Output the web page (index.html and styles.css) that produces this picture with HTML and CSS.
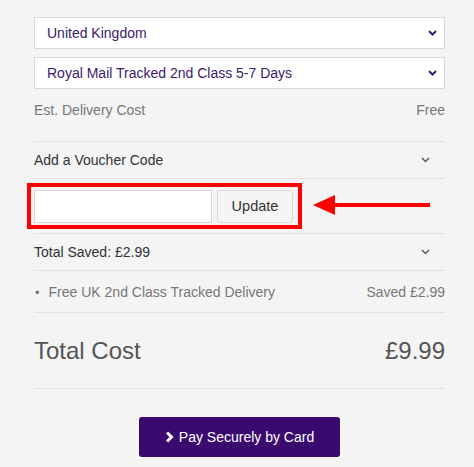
FILE: index.html
```html
<!DOCTYPE html>
<html>
<head>
<meta charset="utf-8">
<link rel="stylesheet" href="styles.css">
</head>
<body>
<div class="page">
  <div class="summary">
    <div class="select">
      <span>United Kingdom</span>
      <svg class="sel-chev" width="9" height="6" viewBox="0 0 9 6"><path d="M1 1l3.5 3.5L8 1" fill="none" stroke="#3b1a6b" stroke-width="2"/></svg>
    </div>
    <div class="select">
      <span>Royal Mail Tracked 2nd Class 5-7 Days</span>
      <svg class="sel-chev" width="9" height="6" viewBox="0 0 9 6"><path d="M1 1l3.5 3.5L8 1" fill="none" stroke="#3b1a6b" stroke-width="2"/></svg>
    </div>
    <div class="row est">
      <span>Est. Delivery Cost</span>
      <span>Free</span>
    </div>
    <div class="row toggle voucher-head">
      <span>Add a Voucher Code</span>
      <svg class="chev" width="9" height="6" viewBox="0 0 9 6"><path d="M1 1l3.5 3.5L8 1" fill="none" stroke="#555" stroke-width="1.4"/></svg>
    </div>
    <div class="row voucher-form">
      <div class="voucher-box">
        <input class="voucher-input" type="text">
        <button class="update-btn">Update</button>
        <div class="highlight"></div>
      </div>
      <svg class="arrow" width="120" height="22" viewBox="0 0 120 22"><path d="M20 11H117" stroke="#f00" stroke-width="4"/><path d="M0 11L22 1V21Z" fill="#f00"/></svg>
    </div>
    <div class="row toggle saved-head">
      <span>Total Saved: £2.99</span>
      <svg class="chev" width="9" height="6" viewBox="0 0 9 6"><path d="M1 1l3.5 3.5L8 1" fill="none" stroke="#555" stroke-width="1.4"/></svg>
    </div>
    <div class="row saving">
      <span class="item"><span class="bullet">•</span>Free UK 2nd Class Tracked Delivery</span>
      <span>Saved £2.99</span>
    </div>
    <div class="row total">
      <span>Total Cost</span>
      <span>£9.99</span>
    </div>
    <div class="pay-wrap">
      <button class="pay-btn">
        <svg width="9" height="12" viewBox="0 0 9 12"><path d="M2 1.5l4.5 4.5L2 10.5" fill="none" stroke="#fff" stroke-width="3"/></svg>
        <span>Pay Securely by Card</span>
      </button>
    </div>
  </div>
</div>
</body>
</html>
```
FILE: styles.css
```css
html, body {
  margin: 0;
  padding: 0;
}
body {
  background: #f4f4f4;
  font-family: "Liberation Sans", Arial, sans-serif;
  font-size: 14px;
  width: 474px;
  height: 467px;
  overflow: hidden;
}
.page {
  padding: 17px 29px 0 34px;
}
.summary {
  width: 411px;
  display: flex;
  flex-direction: column;
}
.select {
  box-sizing: border-box;
  height: 32px;
  background: #fff;
  border: 1px solid #d9d9d9;
  display: flex;
  align-items: center;
  justify-content: space-between;
  padding: 0 7px 0 12px;
  color: #3b1a6b;
  font-size: 14px;
  margin-bottom: 8px;
}
.select + .select {
  margin-bottom: 0;
}
.row {
  display: flex;
  justify-content: space-between;
  align-items: center;
  border-bottom: 1px solid #e2e2e2;
  box-sizing: border-box;
}
.est {
  color: #777;
  height: 53px;
  padding-bottom: 11px;
}
.toggle {
  color: #333;
  height: 37px;
}
.chev {
  margin-right: 15px;
}
.voucher-form {
  height: 55px;
  position: relative;
  justify-content: flex-start;
}
.voucher-box {
  display: flex;
  gap: 5px;
  position: relative;
}
.voucher-input {
  box-sizing: border-box;
  width: 178px;
  height: 33px;
  background: #fff;
  border: 1px solid #d6d6d6;
  margin: 0;
  padding: 0;
}
.update-btn {
  box-sizing: border-box;
  width: 76px;
  height: 33px;
  background: #f5f5f5;
  border: 1px solid #dadada;
  border-radius: 3px;
  font-family: inherit;
  font-size: 14.5px;
  color: #333;
  margin: 0;
}
.highlight {
  position: absolute;
  left: -7px;
  top: -7px;
  width: 275px;
  height: 46px;
  box-sizing: border-box;
  border: 4px solid #f00;
}
.arrow {
  position: absolute;
  left: 279px;
  top: 15px;
}
.saved-head {
  height: 37px;
}
.saving {
  color: #777;
  height: 42px;
}
.bullet {
  margin: 0 9px 0 1px;
  font-size: 13px;
}
.total {
  height: 76px;
  color: #555;
  font-size: 24px;
}
.pay-wrap {
  display: flex;
  justify-content: center;
  padding-top: 28px;
}
.pay-btn {
  width: 201px;
  height: 40px;
  background: #3a0a6f;
  border: none;
  border-radius: 3px;
  color: #fff;
  font-family: inherit;
  font-size: 14px;
  display: flex;
  align-items: center;
  justify-content: center;
  gap: 5px;
  margin: 0;
}
```
